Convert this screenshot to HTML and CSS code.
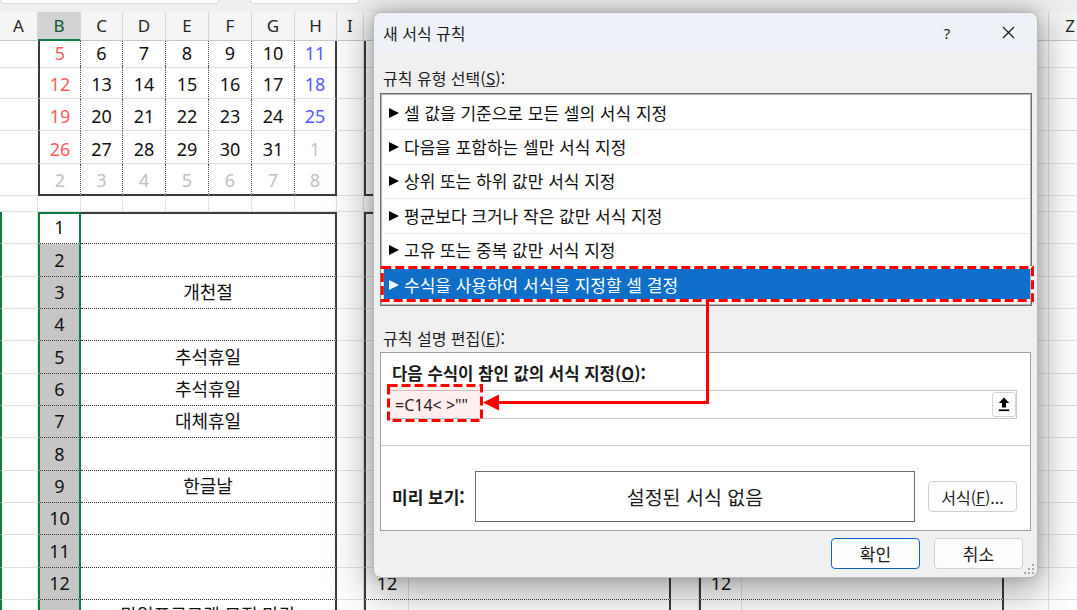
FILE: index.html
```html
<!DOCTYPE html>
<html lang="ko">
<head>
<meta charset="utf-8">
<title>새 서식 규칙</title>
<link rel="stylesheet" href="styles.css">
</head>
<body>
<div class="topbar"><div class="fbox a"></div><div class="fbox b"></div></div>
<div class="sheet">
  <div class="row hdr">
    <div class="c">A</div><div class="c on">B</div><div class="c">C</div><div class="c">D</div><div class="c">E</div><div class="c">F</div><div class="c">G</div><div class="c">H</div><div class="c">I</div><div class="c">J</div><div class="c">Q</div><div class="c">R</div><div class="c">Y</div><div class="c">Z</div>
  </div>
  <div class="row r0">
    <div class="c na"></div><div class="c k kl red">5</div><div class="c k">6</div><div class="c k">7</div><div class="c k">8</div><div class="c k">9</div><div class="c k">10</div><div class="c kr blu">11</div><div class="c"></div><div class="c jp"></div><div class="c"></div><div class="c"></div><div class="c"></div><div class="c"></div>
  </div>
  <div class="row cr">
    <div class="c na"></div><div class="c k kl red">12</div><div class="c k">13</div><div class="c k">14</div><div class="c k">15</div><div class="c k">16</div><div class="c k">17</div><div class="c kr blu">18</div><div class="c"></div><div class="c jp"></div><div class="c"></div><div class="c"></div><div class="c"></div><div class="c"></div>
  </div>
  <div class="row cr">
    <div class="c na"></div><div class="c k kl red">19</div><div class="c k">20</div><div class="c k">21</div><div class="c k">22</div><div class="c k">23</div><div class="c k">24</div><div class="c kr blu">25</div><div class="c"></div><div class="c jp"></div><div class="c"></div><div class="c"></div><div class="c"></div><div class="c"></div>
  </div>
  <div class="row cr">
    <div class="c na"></div><div class="c k kl red">26</div><div class="c k">27</div><div class="c k">28</div><div class="c k">29</div><div class="c k">30</div><div class="c k">31</div><div class="c kr gry">1</div><div class="c"></div><div class="c jp"></div><div class="c"></div><div class="c"></div><div class="c"></div><div class="c"></div>
  </div>
  <div class="row cr">
    <div class="c na"></div><div class="c k kl kb gry">2</div><div class="c k kb gry">3</div><div class="c k kb gry">4</div><div class="c k kb gry">5</div><div class="c k kb gry">6</div><div class="c k kb gry">7</div><div class="c kr kb gry">8</div><div class="c"></div><div class="c jp kb"></div><div class="c"></div><div class="c"></div><div class="c"></div><div class="c"></div>
  </div>
  <div class="row sp">
    <div class="c"></div><div class="c"></div><div class="c"></div><div class="c"></div><div class="c"></div><div class="c"></div><div class="c"></div><div class="c"></div><div class="c"></div><div class="c"></div><div class="c"></div><div class="c"></div><div class="c"></div><div class="c"></div>
  </div>
  <div class="row lr">
    <div class="c ga"></div><div class="c g g0">1</div><div class="c m mt"></div><div class="c"></div><div class="c jp jt"></div><div class="c"></div><div class="c"></div><div class="c"></div><div class="c"></div>
  </div>
  <div class="row lr">
    <div class="c ga"></div><div class="c g">2</div><div class="c m"></div><div class="c"></div><div class="c jp"></div><div class="c"></div><div class="c"></div><div class="c"></div><div class="c"></div>
  </div>
  <div class="row lr">
    <div class="c ga"></div><div class="c g">3</div><div class="c m">개천절</div><div class="c"></div><div class="c jp"></div><div class="c"></div><div class="c"></div><div class="c"></div><div class="c"></div>
  </div>
  <div class="row lr">
    <div class="c ga"></div><div class="c g">4</div><div class="c m"></div><div class="c"></div><div class="c jp"></div><div class="c"></div><div class="c"></div><div class="c"></div><div class="c"></div>
  </div>
  <div class="row lr">
    <div class="c ga"></div><div class="c g">5</div><div class="c m">추석휴일</div><div class="c"></div><div class="c jp"></div><div class="c"></div><div class="c"></div><div class="c"></div><div class="c"></div>
  </div>
  <div class="row lr">
    <div class="c ga"></div><div class="c g">6</div><div class="c m">추석휴일</div><div class="c"></div><div class="c jp"></div><div class="c"></div><div class="c"></div><div class="c"></div><div class="c"></div>
  </div>
  <div class="row lr">
    <div class="c ga"></div><div class="c g">7</div><div class="c m">대체휴일</div><div class="c"></div><div class="c jp"></div><div class="c"></div><div class="c"></div><div class="c"></div><div class="c"></div>
  </div>
  <div class="row lr">
    <div class="c ga"></div><div class="c g">8</div><div class="c m"></div><div class="c"></div><div class="c jp"></div><div class="c"></div><div class="c"></div><div class="c"></div><div class="c"></div>
  </div>
  <div class="row lr">
    <div class="c ga"></div><div class="c g">9</div><div class="c m">한글날</div><div class="c"></div><div class="c jp"></div><div class="c"></div><div class="c"></div><div class="c"></div><div class="c"></div>
  </div>
  <div class="row lr">
    <div class="c ga"></div><div class="c g">10</div><div class="c m"></div><div class="c"></div><div class="c jp"></div><div class="c"></div><div class="c"></div><div class="c"></div><div class="c"></div>
  </div>
  <div class="row lr">
    <div class="c ga"></div><div class="c g">11</div><div class="c m"></div><div class="c"></div><div class="c jp"></div><div class="c"></div><div class="c"></div><div class="c"></div><div class="c"></div>
  </div>
  <div class="row lr">
    <div class="c ga"></div><div class="c g">12</div><div class="c m"></div><div class="c"></div>
    <div class="blk bj"><div class="bn">12</div><div class="bm"></div></div>
    <div class="c"></div>
    <div class="blk br"><div class="bn">12</div><div class="bm"></div></div>
    <div class="c"></div><div class="c"></div>
  </div>
  <div class="row lr last">
    <div class="c ga"></div><div class="c g"></div><div class="c m">말일프로그램 모집 마감</div><div class="c"></div>
    <div class="blk bj"><div class="bn"></div><div class="bm"></div></div>
    <div class="c"></div>
    <div class="blk br"><div class="bn"></div><div class="bm"></div></div>
    <div class="c"></div><div class="c"></div>
  </div>
</div>

<div class="dialog">
  <div class="title">
    <span class="t">새 서식 규칙</span>
    <span class="help">?</span>
    <span class="close"><svg width="13" height="13" viewBox="0 0 13 13"><path d="M1 1L12 12M12 1L1 12" stroke="#1a1a1a" stroke-width="1.2" fill="none"/></svg></span>
  </div>
  <div class="body">
    <div class="lbl">규칙 유형 선택(<u>S</u>):</div>
    <div class="list">
      <div class="item"><span class="tri"></span>셀 값을 기준으로 모든 셀의 서식 지정</div>
      <div class="item"><span class="tri"></span>다음을 포함하는 셀만 서식 지정</div>
      <div class="item"><span class="tri"></span>상위 또는 하위 값만 서식 지정</div>
      <div class="item"><span class="tri"></span>평균보다 크거나 작은 값만 서식 지정</div>
      <div class="item"><span class="tri"></span>고유 또는 중복 값만 서식 지정</div>
      <div class="item sel"><span class="tri"></span>수식을 사용하여 서식을 지정할 셀 결정</div>
    </div>
    <div class="lbl lbl2">규칙 설명 편집(<u>E</u>):</div>
    <div class="panel">
      <div class="plbl">다음 수식이 참인 값의 서식 지정(<u>O</u>):</div>
      <div class="inp">
        <span class="formula">=C14&lt; &gt;""</span>
        <span class="upbtn"><svg width="12" height="15" viewBox="0 0 12 15"><path d="M6 0.5L11.2 6H8V10.5H4V6H0.8Z" fill="#000"/><rect x="0.8" y="12.4" width="10.4" height="1.7" fill="#000"/></svg></span>
      </div>
      <div class="sep"></div>
      <div class="prow">
        <span class="pl">미리 보기:</span>
        <div class="pbox">설정된 서식 없음</div>
        <div class="btn fmt">서식(<u>F</u>)...</div>
      </div>
    </div>
    <div class="acts">
      <div class="btn ok">확인</div>
      <div class="btn">취소</div>
    </div>
  </div>
  <svg class="grip" width="11" height="11" viewBox="0 0 11 11"><g fill="#a8a8a8"><rect x="8" y="0" width="2" height="2"/><rect x="8" y="4" width="2" height="2"/><rect x="4" y="4" width="2" height="2"/><rect x="8" y="8" width="2" height="2"/><rect x="4" y="8" width="2" height="2"/><rect x="0" y="8" width="2" height="2"/></g></svg>
</div>

<svg class="annot" width="1077" height="610" viewBox="0 0 1077 610">
  <rect x="382.3" y="267.5" width="650.2" height="33" fill="none" stroke="#fff" stroke-width="3"/>
  <rect x="382.3" y="267.5" width="650.2" height="33" fill="none" stroke="#ff0000" stroke-width="3" stroke-dasharray="9 4"/>
  <rect x="388.5" y="385.5" width="93" height="35" fill="rgba(255,40,40,0.08)" stroke="#fff" stroke-width="3"/>
  <rect x="388.5" y="385.5" width="93" height="35" fill="none" stroke="#ff0000" stroke-width="3" stroke-dasharray="9 4"/>
  <path d="M707.5 302V402.5H497" fill="none" stroke="#ff0000" stroke-width="3"/>
  <polygon points="483,402.5 499,394.5 499,410.5" fill="#ff0000"/>
</svg>
</body>
</html>
```

FILE: styles.css
```css
* { box-sizing: border-box; }
html, body { margin: 0; padding: 0; }
body {
  width: 1077px;
  height: 610px;
  overflow: hidden;
  background: #fff;
  position: relative;
  font-family: "Noto Sans", "Noto Sans CJK KR", sans-serif;
  color: #111;
}

/* top strip */
.topbar { height: 12px; background: #efefef; display: flex; gap: 31px; }
.fbox { height: 4px; background: #fff; border: 1px solid #dcdcdc; border-top: none; border-radius: 0 0 4px 4px; }
.fbox.a { width: 219px; }
.fbox.b { width: 110px; }

/* sheet */
.row {
  display: grid;
  grid-template-columns: 38px 43px 42px 43px 43px 43px 43px 42px 27px 307px 28px 305px 45px 43px;
}
.c {
  border-right: 1px solid #e1e1e1;
  border-bottom: 1px solid #e1e1e1;
  display: flex;
  align-items: flex-end;
  justify-content: center;
  font-size: 18px;
  line-height: 24px;
  padding-bottom: 2px;
  white-space: nowrap;
}
.hdr { height: 29px; }
.hdr .c {
  background: #f5f5f5;
  border-right-color: #d6d6d6;
  border-bottom-color: #c6c6c6;
  align-items: center;
  padding: 0;
  font-size: 17px;
  color: #262626;
}
.hdr .c.on { background: #d3d3d3; border-bottom: 2px solid #107c41; color: #0e5a32; }

.r0 { height: 25px; }
.cr { height: 32.5px; }
.sp { height: 16px; }
.lr { height: 32.333px; }
.last { height: 20px; }

.na { border-right: none; }
.k { border-right: 1px dotted #4a4a4a; }
.kl { border-left: 2px solid #3c3c3c; }
.kr { border-right: 2px solid #3c3c3c; }
.kb { border-bottom: 2px solid #3c3c3c; }
.jp { border-left: 2px solid #3c3c3c; }
.jt { border-top: 2px solid #3c3c3c; }
.red { color: #ff5c5c; }
.blu { color: #5a5aff; }
.gry { color: #c0c0c0; }

.lr .c { padding-bottom: 4px; }
.last .c { padding-bottom: 0; align-items: flex-start; padding-top: 3px; }
.ga { border-left: 2px solid #107c41; }
.g {
  background: #c6c6c6;
  border-left: 2px solid #107c41;
  border-right: 2px solid #107c41;
  border-bottom: 1px dotted #333;
}
.g0 { background: #fff; border-top: 2px solid #107c41; }
.m {
  grid-column: span 6;
  border-bottom: 1px dotted #333;
  border-right: 2px solid #3c3c3c;
}
.mt { border-top: 2px solid #3c3c3c; }

.blk {
  display: grid;
  border-left: 2px solid #3c3c3c;
  border-right: 2px solid #3c3c3c;
  border-bottom: 1px dotted #333;
}
.bj { grid-template-columns: 43px 1fr; }
.br { grid-template-columns: 41px 1fr; }
.bn {
  border-right: 1px solid #e1e1e1;
  display: flex;
  align-items: flex-end;
  justify-content: center;
  font-size: 18px;
  line-height: 24px;
  padding-bottom: 4px;
}

/* dialog */
.dialog {
  position: absolute;
  left: 373px;
  top: 12px;
  width: 665px;
  height: 566px;
  background: #f0f0f0;
  border: 1px solid #b9b9b9;
  border-radius: 8px;
  box-shadow: 0 10px 40px 4px rgba(0, 0, 0, 0.36), 0 0 12px rgba(0, 0, 0, 0.16);
  font-family: "Noto Sans CJK KR", "Noto Sans", sans-serif;
  color: #1a1a1a;
  overflow: hidden;
  display: flex;
  flex-direction: column;
}
.title {
  height: 39px;
  flex: none;
  background: #eef1f7;
  display: flex;
  align-items: center;
  padding-left: 9px;
  font-size: 16px;
}
.title .t { flex: 1; }
.help { width: 20px; text-align: center; font-size: 15px; margin-right: 28px; font-family: "Noto Sans", sans-serif; color: #222; }
.close { width: 46px; height: 39px; display: flex; align-items: center; justify-content: center; margin-right: 6px; }

.body { flex: 1; padding: 15px 5px 0 6px; display: flex; flex-direction: column; }
.lbl { font-size: 16px; line-height: 22px; padding-left: 3px; margin-bottom: 4px; }
.lbl2 { margin-top: 21px; margin-bottom: 3px; }

.list {
  height: 213px;
  flex: none;
  background: #fff;
  border: 1px solid #6f6f6f;
  box-shadow: inset 0 0 0 1px #b4b4b4;
  padding: 2px 1px 0 1px;
}
.item {
  height: 34.4px;
  border-bottom: 1px solid #ececec;
  display: flex;
  align-items: center;
  padding-left: 7px;
  font-size: 17px;
  line-height: 20px;
  color: #111;
}
.tri {
  width: 0;
  height: 0;
  border-left: 10px solid #000;
  border-top: 5px solid transparent;
  border-bottom: 5px solid transparent;
  margin-right: 5px;
}
.item.sel { background: #1070c9; color: #fff; border-bottom: none; }
.item.sel .tri { border-left-color: #f4f8ff; }

.panel {
  height: 179px;
  flex: none;
  margin-right: 1px;
  background: #fff;
  border: 1px solid #a0a0a0;
  padding-top: 9px;
}
.plbl { font-weight: bold; font-size: 16.7px; line-height: 22px; padding-left: 11px; }
.inp {
  margin: 6px 13px 0 8px;
  height: 29px;
  border: 1px solid #c9c9c9;
  display: flex;
  align-items: center;
}
.formula { padding-left: 5px; font-family: "Noto Sans", sans-serif; font-size: 16px; color: #202020; }
.upbtn {
  margin-left: auto;
  width: 24px;
  height: 25px;
  border: 1px solid #d5d5d5;
  border-radius: 3px;
  background: #fdfdfd;
  display: flex;
  align-items: center;
  justify-content: center;
}
.sep { height: 1px; background: #cdcdcd; margin-top: 26px; }
.prow { margin-top: 25px; display: flex; align-items: center; padding-left: 11px; }
.pl { width: 83px; font-weight: bold; font-size: 17px; }
.pbox {
  width: 440px;
  height: 51px;
  border: 1px solid #6a6a6a;
  display: flex;
  align-items: center;
  justify-content: center;
  font-size: 19.5px;
}
.btn {
  width: 89px;
  height: 31px;
  border: 1px solid #d0d0d0;
  border-radius: 4px;
  background: #fdfdfd;
  display: flex;
  align-items: center;
  justify-content: center;
  font-size: 17px;
  color: #1a1a1a;
}
.btn.fmt { margin-left: 13px; font-size: 16px; }
.btn.ok { border: 1.5px solid #0a64c4; }
.acts { display: flex; justify-content: flex-end; gap: 14px; margin-top: 7px; padding-right: 9px; }
.grip { position: absolute; right: 2px; bottom: 2px; }

.annot { position: absolute; left: 0; top: 0; pointer-events: none; }
```
